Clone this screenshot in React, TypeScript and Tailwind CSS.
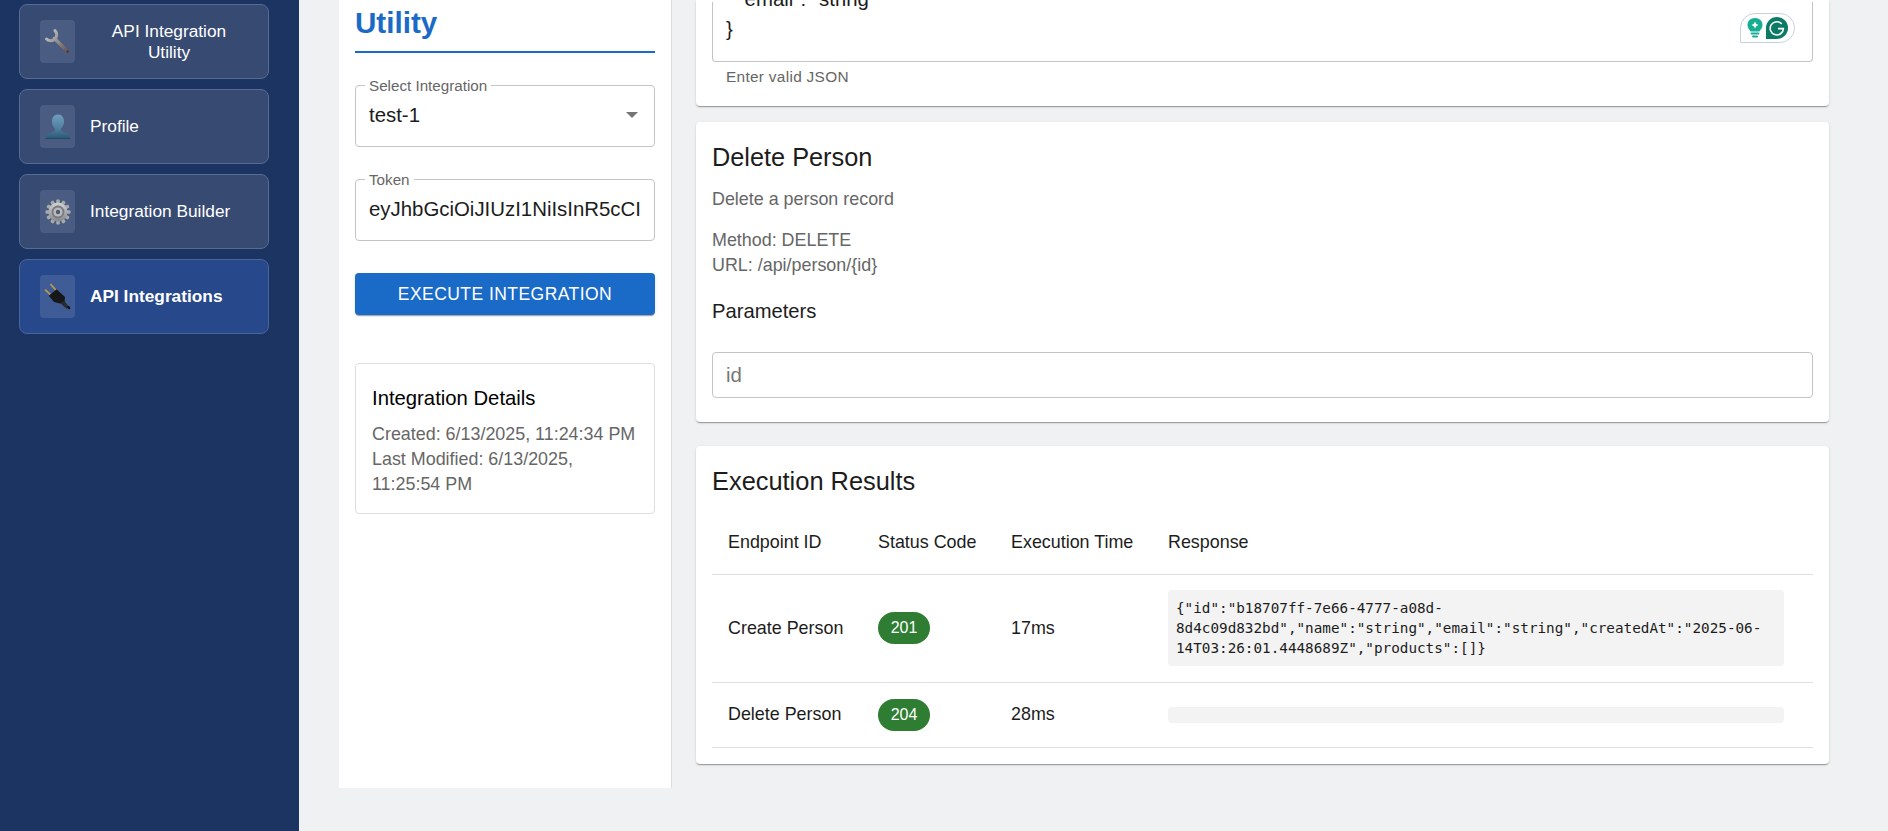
import React from "react";

const cardShadow = "shadow-[0_2px_1px_-1px_rgba(0,0,0,0.2),0_1px_1px_0_rgba(0,0,0,0.14),0_1px_3px_0_rgba(0,0,0,0.12)]";

function Wrench() {
  return (
    <svg width="26" height="26" viewBox="0 0 26 26">
      <defs>
        <linearGradient id="wr" gradientUnits="userSpaceOnUse" x1="2" y1="2" x2="24" y2="24">
          <stop offset="0" stopColor="#c9ccd0" />
          <stop offset="0.55" stopColor="#8a8583" />
          <stop offset="1" stopColor="#5e4a4c" />
        </linearGradient>
      </defs>
      <path d="M10 1.6 A5.4 5.4 0 1 1 1.6 10" fill="none" stroke="url(#wr)" strokeWidth="3" strokeLinecap="round" />
      <path d="M9.5 9.5 L22.6 22.6" fill="none" stroke="url(#wr)" strokeWidth="3.6" strokeLinecap="round" />
      <circle cx="22.6" cy="22.6" r="1" fill="#3b3033" />
    </svg>
  );
}

function Person() {
  return (
    <svg width="26" height="26" viewBox="0 0 26 26">
      <defs>
        <linearGradient id="pe" x1="0" y1="0" x2="0" y2="1">
          <stop offset="0" stopColor="#6f9ebd" />
          <stop offset="0.6" stopColor="#4f7f9f" />
          <stop offset="1" stopColor="#2c5a78" />
        </linearGradient>
      </defs>
      <path d="M13 .5 C8.8 .5 6.8 4 7 8 C7.2 11 8.6 13.4 10 14.8 C10.4 16 9.8 17.2 8 18 C5 19.2 1.2 20.4 .6 24 L25.4 24 C24.8 20.4 21 19.2 18 18 C16.2 17.2 15.6 16 16 14.8 C17.4 13.4 18.8 11 19 8 C19.2 4 17.2 .5 13 .5 Z" fill="url(#pe)" />
      <rect x="0.5" y="24" width="25" height="1" fill="#1f4a66" />
    </svg>
  );
}

function Gear() {
  const teeth = Array.from({ length: 12 }, (_, i) => i * 30);
  return (
    <svg width="26" height="26" viewBox="0 0 26 26">
      <defs>
        <linearGradient id="ge" x1="0" y1="0" x2="0" y2="1">
          <stop offset="0" stopColor="#d0d2d4" />
          <stop offset="1" stopColor="#85878a" />
        </linearGradient>
      </defs>
      {teeth.map((a) => (
        <rect key={a} x="11.2" y="0.5" width="3.6" height="6" rx="1" fill="#a8aaad" transform={`rotate(${a} 13 13)`} />
      ))}
      <circle cx="13" cy="13" r="9.6" fill="url(#ge)" />
      <circle cx="13" cy="13" r="6.4" fill="#77797d" />
      <circle cx="13" cy="13" r="4.6" fill="#b9bbbe" />
      <circle cx="13" cy="13" r="2.2" fill="#4f5a70" />
    </svg>
  );
}

function Plug() {
  return (
    <svg width="28" height="28" viewBox="0 0 28 28">
      <path d="M6.4 1 L12.8 8.2" stroke="#b7964f" strokeWidth="1.8" fill="none" />
      <path d="M1 6.6 L8 13" stroke="#b7964f" strokeWidth="1.8" fill="none" />
      <path d="M12.6 6.2 L21 14 L20.6 19 L16 20.6 L10 19 L4.8 12.8 Z" fill="#16171a" />
      <path d="M16 20 L20.4 18 L24.6 23.4 L22.8 26 Z" fill="#2a2b2e" />
      <path d="M23 24 L25 22.4 L26.4 25.4 L25 26.6 Z" fill="#0d0d0f" />
    </svg>
  );
}

function NavItem({ icon, active, center, children }: { icon: React.ReactNode; active?: boolean; center?: boolean; children: React.ReactNode }) {
  return (
    <div className={`flex h-[75px] items-center rounded-[8px] border pl-[20px] pr-[20px] ${active ? "border-[#4a659c] bg-[#27488a]" : "border-[#586b92] bg-[#374a72]"}`}>
      <div className={`flex h-[43px] w-[35px] shrink-0 items-center justify-center rounded-[4px] ${active ? "bg-[#3f5c96]" : "bg-[#4a5c81]"}`}>{icon}</div>
      <div className={`ml-[15px] flex-1 text-[17.3px] leading-[21px] text-white ${center ? "text-center" : ""} ${active ? "font-bold" : ""}`}>{children}</div>
    </div>
  );
}

function Field({ label, children }: { label: string; children: React.ReactNode }) {
  return (
    <div className="relative h-[62px] rounded-[4px] border border-[#c4c4c4] pl-[13px] pr-[13px] pt-[15px]">
      <span className="absolute left-[9px] top-[-9px] bg-white px-[4px] text-[15.2px] leading-[18px] text-[#666]">{label}</span>
      {children}
    </div>
  );
}

function Grammarly() {
  return (
    <div className="absolute right-[17px] top-[11px] flex h-[30px] w-[55px] items-center justify-center gap-[3px] rounded-r-[15px] rounded-tl-[15px] border border-[#c9cfdc] bg-white">
      <svg width="16" height="20" viewBox="0 0 16 20">
        <path d="M8 0 C3.5 0 .5 3.2 .5 7 C.5 10 2.4 11.6 3.6 13.4 L12.4 13.4 C13.6 11.6 15.5 10 15.5 7 C15.5 3.2 12.5 0 8 0 Z" fill="#16ae92" />
        <path d="M8 3.6 L9.2 5.8 L11.4 7 L9.2 8.2 L8 10.4 L6.8 8.2 L4.6 7 L6.8 5.8 Z" fill="#fff" />
        <rect x="3.6" y="14.4" width="8.8" height="2.2" rx="1" fill="#16ae92" />
        <rect x="5" y="17.4" width="6" height="2" rx="1" fill="#16ae92" />
      </svg>
      <svg width="22" height="22" viewBox="0 0 22 22">
        <path d="M11 0 A11 11 0 0 1 11 22 L0 22 L0 11 A11 11 0 0 1 11 0 Z" fill="#0c7a65" />
        <path d="M15.8 7 A6.6 6.6 0 1 0 17.4 11.6 L12 11.6" fill="none" stroke="#fff" strokeWidth="1.6" />
      </svg>
    </div>
  );
}

const thClass = "px-[16px] text-left align-middle text-[17.9px] font-normal text-[#1c1c1c] border-b border-[#e0e0e0]";
const tdClass = "px-[16px] align-middle text-[17.9px] text-[#1c1c1c] border-b border-[#e0e0e0]";

function Badge({ children }: { children: React.ReactNode }) {
  return <span className="flex h-[32px] w-[52px] items-center justify-center rounded-full bg-[#2e7d32] text-[16px] text-white">{children}</span>;
}

export default function App() {
  return (
    <div className="flex h-[831px] w-[1888px] overflow-hidden bg-[#f0f1f3] font-['Liberation_Sans',Arial,sans-serif]">
      <aside className="flex w-[299px] shrink-0 flex-col gap-[10px] bg-[#1b3462] pl-[19px] pr-[30px] pt-[4px]">
        <NavItem icon={<Wrench />} center>API Integration Utility</NavItem>
        <NavItem icon={<Person />}>Profile</NavItem>
        <NavItem icon={<Gear />}>Integration Builder</NavItem>
        <NavItem icon={<Plug />} active>API Integrations</NavItem>
      </aside>

      <main className="flex flex-1 items-start pl-[40px]">
        <section className="h-[788px] w-[333px] shrink-0 border-r border-[#dcdcdc] bg-white px-[16px]">
          <div className="flex h-[53px] items-start border-b-2 border-[#1a6ac8]">
            <h1 className="mt-[5px] text-[29.6px] font-bold leading-[36px] text-[#1a6ac8]">Utility</h1>
          </div>
          <div className="mt-[32px]">
            <Field label="Select Integration">
              <div className="flex items-center justify-between text-[20.4px] leading-[28px] text-[#1c1c1c]">
                <span>test-1</span>
                <svg width="12" height="6" viewBox="0 0 12 6" className="mr-[3px]"><path d="M0 0 L12 0 L6 6 Z" fill="#757575" /></svg>
              </div>
            </Field>
          </div>
          <div className="mt-[32px]">
            <Field label="Token">
              <div className="overflow-hidden whitespace-nowrap text-[20.4px] leading-[28px] text-[#1c1c1c]">eyJhbGciOiJIUzI1NiIsInR5cCI</div>
            </Field>
          </div>
          <button className={`mt-[32px] flex h-[42px] w-full items-center justify-center rounded-[4px] bg-[#1a6ac8] text-[17.5px] uppercase tracking-[0.45px] text-white ${cardShadow}`}>Execute Integration</button>
          <div className="mt-[48px] h-[151px] rounded-[4px] border border-[#dedede] pl-[16px] pr-[10px] pt-[21px]">
            <h2 className="text-[20.3px] leading-[26px] text-black">Integration Details</h2>
            <p className="mt-[11px] text-[17.9px] leading-[25.2px] text-[#666]">Created: 6/13/2025, 11:24:34 PM<br />Last Modified: 6/13/2025, 11:25:54 PM</p>
          </div>
        </section>

        <div className="ml-[24px] flex w-[1133px] shrink-0 flex-col">
          <div className={`flex h-[106px] flex-col justify-end overflow-hidden rounded-b-[4px] bg-white px-[16px] pb-[21px] ${cardShadow}`}>
            <div className="relative flex h-[60px] flex-col justify-end rounded-b-[4px] border-x border-b border-[#c4c4c4] pb-[17px] pl-[13px] text-[20.4px] leading-[30px] text-[#1c1c1c]">
              <div className="whitespace-pre">{'  "email": "string"'}</div>
              <div>{"}"}</div>
              <Grammarly />
            </div>
            <div className="mt-[6px] pl-[14px] text-[15.4px] leading-[17px] tracking-[0.3px] text-[#666]">Enter valid JSON</div>
          </div>

          <div className={`mt-[16px] h-[300px] rounded-[4px] bg-white px-[16px] pt-[21px] ${cardShadow}`}>
            <h2 className="text-[25.3px] leading-[29px] text-[#1c1c1c]">Delete Person</h2>
            <p className="mt-[15px] text-[17.9px] leading-[24px] text-[#666]">Delete a person record</p>
            <p className="mt-[17px] text-[17.9px] leading-[25px] text-[#666]">Method: DELETE<br />URL: /api/person/{"{id}"}</p>
            <h3 className="mt-[20px] text-[20.2px] leading-[26px] text-[#1c1c1c]">Parameters</h3>
            <div className="mt-[28px] flex h-[46px] items-center rounded-[4px] border border-[#c4c4c4] px-[13px] text-[20.4px] text-[#777]">id</div>
          </div>

          <div className={`mt-[24px] h-[318px] rounded-[4px] bg-white px-[16px] pt-[21px] ${cardShadow}`}>
            <h2 className="text-[25.4px] leading-[29px] text-[#1c1c1c]">Execution Results</h2>
            <table className="mt-[15px] w-full table-fixed border-collapse">
              <colgroup>
                <col className="w-[150px]" />
                <col className="w-[133px]" />
                <col className="w-[157px]" />
                <col />
              </colgroup>
              <thead>
                <tr className="h-[63px]">
                  <th className={thClass}>Endpoint ID</th>
                  <th className={thClass}>Status Code</th>
                  <th className={thClass}>Execution Time</th>
                  <th className={thClass}>Response</th>
                </tr>
              </thead>
              <tbody>
                <tr className="h-[108px]">
                  <td className={tdClass}>Create Person</td>
                  <td className={tdClass}><Badge>201</Badge></td>
                  <td className={tdClass}>17ms</td>
                  <td className={tdClass}>
                    <div className="h-[76px] w-[616px] whitespace-pre rounded-[4px] bg-[#f3f3f3] p-[8px] font-['DejaVu_Sans_Mono',monospace] text-[14.3px] leading-[20px] text-[#1c1c1c]">{'{"id":"b18707ff-7e66-4777-a08d-\n8d4c09d832bd","name":"string","email":"string","createdAt":"2025-06-\n14T03:26:01.4448689Z","products":[]}'}</div>
                  </td>
                </tr>
                <tr className="h-[65px]">
                  <td className={tdClass}>Delete Person</td>
                  <td className={tdClass}><Badge>204</Badge></td>
                  <td className={tdClass}>28ms</td>
                  <td className={tdClass}><div className="h-[16px] w-[616px] rounded-[4px] bg-[#f3f3f3]" /></td>
                </tr>
              </tbody>
            </table>
          </div>
        </div>
      </main>
    </div>
  );
}
